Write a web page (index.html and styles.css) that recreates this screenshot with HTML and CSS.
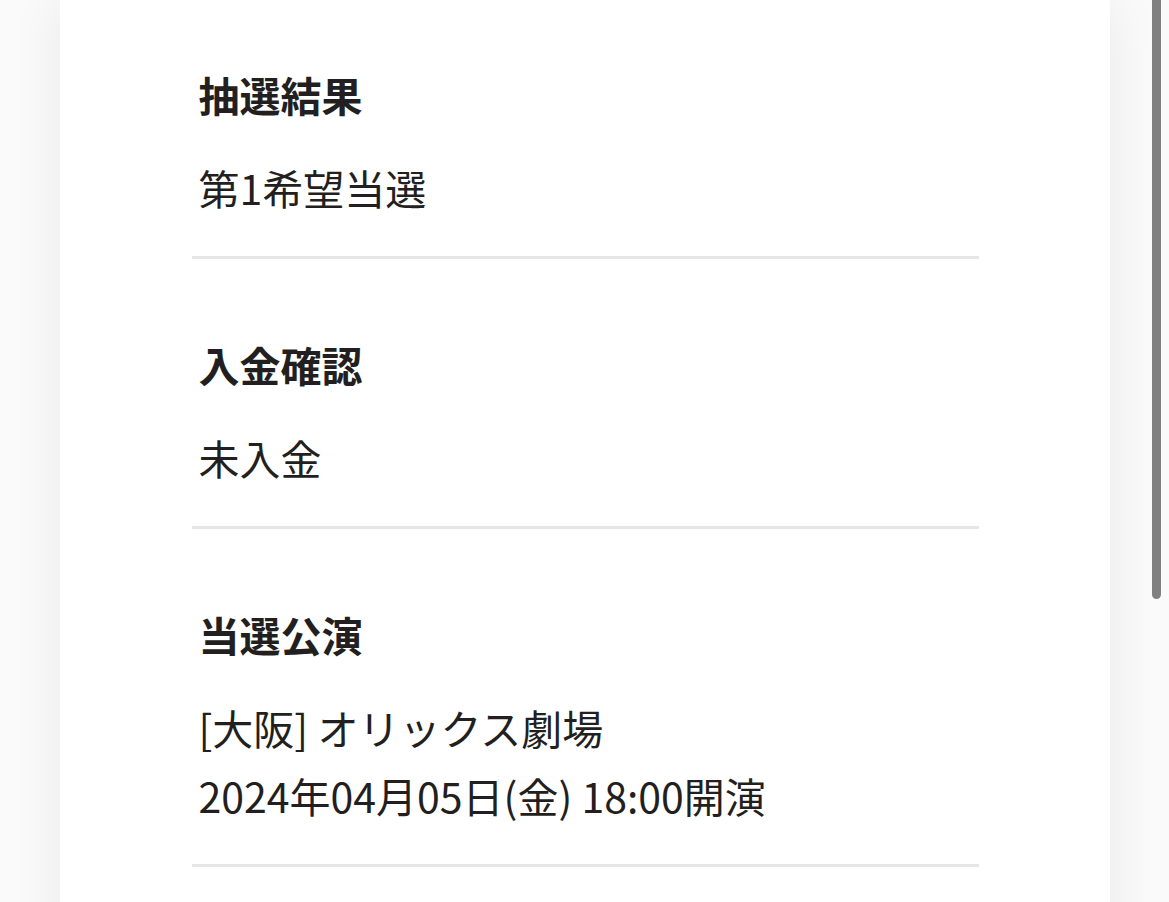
FILE: index.html
```html
<!DOCTYPE html>
<html lang="ja">
<head>
  <meta charset="utf-8">
  <meta name="viewport" content="width=device-width, initial-scale=1">
  <title>申込詳細</title>
  <link rel="stylesheet" href="styles.css">
</head>
<body>
  <div class="page">
    <div class="card">
      <div class="detail-list">
        <div class="detail-item">
          <div class="detail-label">抽選結果</div>
          <div class="detail-value">第1希望当選</div>
        </div>
        <div class="detail-item">
          <div class="detail-label">入金確認</div>
          <div class="detail-value">未入金</div>
        </div>
        <div class="detail-item">
          <div class="detail-label">当選公演</div>
          <div class="detail-value">[大阪] オリックス劇場</div>
          <div class="detail-value">2024年04月05日(金) 18:00開演</div>
        </div>
      </div>
    </div>
  </div>
  <div class="scroll-thumb"></div>
</body>
</html>
```

FILE: styles.css
```css
html, body {
  height: 100%;
  margin: 0;
  padding: 0;
  overflow: hidden;
}

body {
  position: relative;
  background-color: #fafafa;
  color: #231f20;
  font-family: "Noto Sans CJK JP", "Noto Sans", sans-serif;
}

.page {
  padding: 0 59px 0 60px;
}

.card {
  min-height: 1200px;
  background: #fff;
  box-shadow: 0 0 50px rgba(0, 0, 0, 0.07);
  padding-top: 37px;
}

.detail-list {
  width: 787px;
  margin: 0 auto;
}

.detail-item {
  padding: 27px 7px 35px;
  border-bottom: 3px solid #e6e6e6;
}

.detail-item + .detail-item {
  padding-top: 75px;
}

.detail-label {
  font-size: 41px;
  font-weight: bold;
  line-height: 60px;
  margin-bottom: 29px;
}

.detail-value {
  font-size: 41px;
  font-weight: normal;
  line-height: 68px;
}

.scroll-thumb {
  position: absolute;
  top: -20px;
  right: 8px;
  width: 9px;
  height: 619px;
  border-radius: 5px;
  background: #808080;
}
```
